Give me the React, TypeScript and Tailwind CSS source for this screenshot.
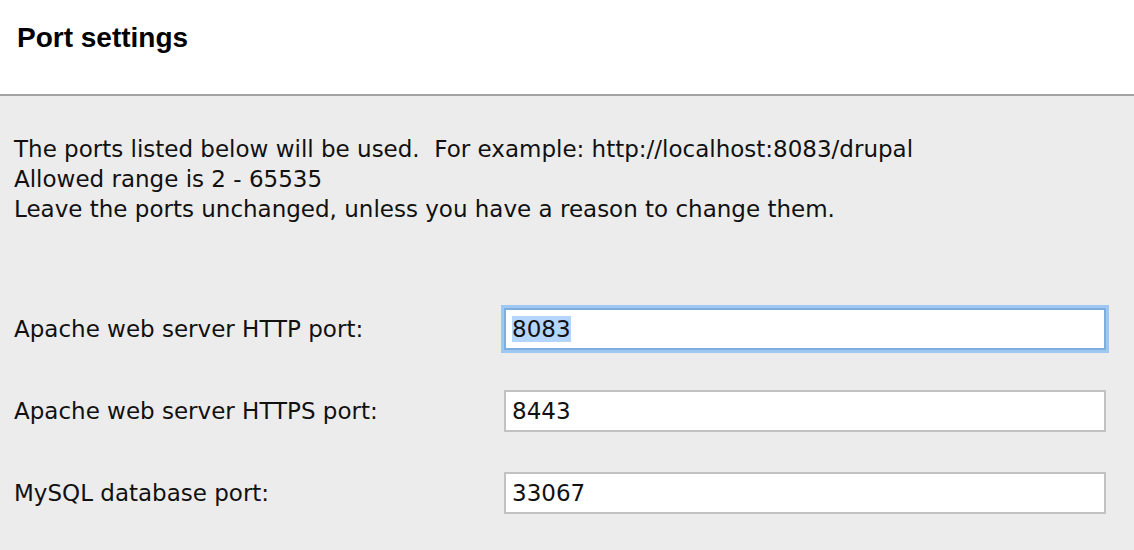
import React, { useEffect, useRef } from 'react';

const ports = [
  { label: 'Apache web server HTTP port:', value: '8083', focused: true },
  { label: 'Apache web server HTTPS port:', value: '8443', focused: false },
  { label: 'MySQL database port:', value: '33067', focused: false },
];

const PortRow: React.FC<{ label: string; value: string; focused: boolean }> = ({ label, value, focused }) => {
  const ref = useRef<HTMLInputElement>(null);

  useEffect(() => {
    if (focused && ref.current) {
      ref.current.focus();
      ref.current.select();
    }
  }, [focused]);

  return (
    <div className="flex items-center h-[82px]">
      <label className="w-[490px] shrink-0">{label}</label>
      <input
        ref={ref}
        defaultValue={value}
        className={`w-[602px] h-[42px] bg-white px-[6px] text-[#111] outline-none selection:bg-[#b4d5fe] ${
          focused
            ? 'border-2 border-[#7eaedf] shadow-[0_0_0_3px_#9ec7f2]'
            : 'border-2 border-[#c2c2c2]'
        }`}
      />
    </div>
  );
};

export default function App() {
  return (
    <div className="w-[1134px] h-[550px] overflow-hidden bg-[#ececec] text-[#111] font-['DejaVu_Sans',sans-serif] text-[23px]">
      <div className="h-[96px] bg-white border-b-2 border-[#a3a3a3] pl-[17px] pt-[22px]">
        <h1 className="font-['Liberation_Sans',Arial,sans-serif] font-bold text-[28px] leading-[32px] text-black">
          Port settings
        </h1>
      </div>

      <div className="pl-[14px] pt-[38px]">
        <div className="leading-[30px]">
          <p>The ports listed below will be used.&nbsp; For example: http://localhost:8083/drupal</p>
          <p>Allowed range is 2 - 65535</p>
          <p>Leave the ports unchanged, unless you have a reason to change them.</p>
        </div>

        <div className="mt-[64px]">
          {ports.map((p) => (
            <PortRow key={p.label} {...p} />
          ))}
        </div>
      </div>
    </div>
  );
}
